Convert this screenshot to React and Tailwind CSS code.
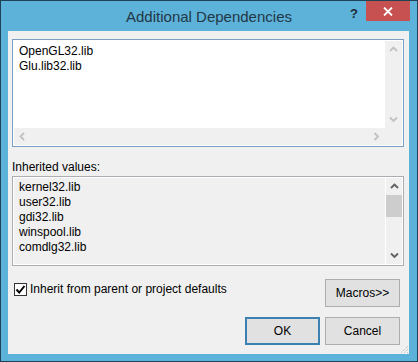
import React from "react";

const Chevron = ({ dir = "up", color = "#c2c2c2" }) => {
  const pts = {
    up: "1,5 4.5,1.5 8,5",
    down: "1,1.5 4.5,5 8,1.5",
    left: "5,1 1.5,4.5 5,8",
    right: "1.5,1 5,4.5 1.5,8",
  }[dir];
  const horiz = dir === "left" || dir === "right";
  return (
    <svg width={horiz ? 7 : 9} height={horiz ? 9 : 7} viewBox={horiz ? "0 0 7 9" : "0 0 9 7"}>
      <polyline points={pts} fill="none" stroke={color} strokeWidth="1.9" />
    </svg>
  );
};

const Btn = ({ children, primary }) => (
  <button
    className={
      "w-[75px] h-[28px] bg-[#e1e1e1] text-[12px] text-black border " +
      (primary ? "border-[#3c7fb1] shadow-[inset_0_0_0_1px_#3c7fb1]" : "border-[#adadad]")
    }
  >
    {children}
  </button>
);

export default function App() {
  return (
    <div className="w-[418px] h-[362px] bg-[#1f4257] p-px font-['Segoe_UI','Liberation_Sans',sans-serif]">
      <div className="h-full bg-[#5cb2d8] flex flex-col pl-[7px] pr-[8px] pb-[7px]">
        {/* title bar */}
        <div className="relative h-[30px] -ml-[7px] -mr-[8px] flex items-center justify-center">
          <span className="text-[15px] text-[#233746] leading-none">Additional Dependencies</span>
          <span className="absolute left-[349px] top-[3px] text-[13px] font-bold text-[#1d2b35]">?</span>
          <div className="absolute right-[7px] top-0 w-[44px] h-[20px] bg-[#c75050] flex items-center justify-center">
            <svg width="10" height="9" viewBox="0 0 10 9">
              <path d="M1 0.5 L9 8.5 M9 0.5 L1 8.5" stroke="white" strokeWidth="1.8" />
            </svg>
          </div>
        </div>

        {/* client area */}
        <div className="relative flex-1 bg-[#f0f0f0] pl-[4px] pr-[5px] pt-[8px] flex flex-col text-[12px] text-black">
          {/* additional deps edit box */}
          <div className="h-[108px] border border-[#7a9ec4] bg-white p-px grid grid-cols-[1fr_17px] grid-rows-[1fr_17px]">
            <div className="pl-[5px] pt-[3px] leading-[15px]">
              <div>OpenGL32.lib</div>
              <div>Glu.lib32.lib</div>
            </div>
            <div className="bg-[#f0f0f0] flex flex-col justify-between">
              <div className="h-[17px] flex items-center justify-center"><Chevron dir="up" /></div>
              <div className="h-[17px] flex items-center justify-center"><Chevron dir="down" /></div>
            </div>
            <div className="bg-[#f0f0f0] flex justify-between">
              <div className="w-[17px] flex items-center justify-center"><Chevron dir="left" /></div>
              <div className="w-[17px] flex items-center justify-center"><Chevron dir="right" /></div>
            </div>
            <div className="bg-[#f0f0f0]" />
          </div>

          <div className="mt-[13px] leading-[15px]">Inherited values:</div>

          {/* inherited values */}
          <div className="mt-[1px] h-[90px] border border-[#abadb3] bg-white p-px">
            <div className="h-full bg-[#f0f0f0] flex">
              <div className="flex-1 pl-[5px] pt-[2px] leading-[15px]">
                <div>kernel32.lib</div>
                <div>user32.lib</div>
                <div>gdi32.lib</div>
                <div>winspool.lib</div>
                <div>comdlg32.lib</div>
              </div>
              <div className="w-[17px] border-l border-white flex flex-col">
                <div className="h-[17px] flex items-center justify-center"><Chevron dir="up" color="#606060" /></div>
                <div className="h-[22px] bg-[#cdcdcd]" />
                <div className="flex-1" />
                <div className="h-[17px] flex items-center justify-center"><Chevron dir="down" color="#606060" /></div>
              </div>
            </div>
          </div>

          {/* checkbox + macros */}
          <div className="flex justify-between pr-[4px]">
            <label className="mt-[17px] ml-[2px] flex items-center gap-[3px] h-[13px]">
              <span className="w-[13px] h-[13px] border border-[#333] bg-white flex items-center justify-center">
                <svg width="11" height="11" viewBox="0 0 11 11">
                  <polyline points="1.5,5.5 4.2,8.5 9.5,2" fill="none" stroke="#000" strokeWidth="1.9" />
                </svg>
              </span>
              <span className="leading-[15px]">Inherit from parent or project defaults</span>
            </label>
            <div className="mt-[13px]">
              <Btn>Macros&gt;&gt;</Btn>
            </div>
          </div>

          {/* OK / Cancel */}
          <div className="mt-[10px] flex justify-end gap-[5px] pr-[4px]">
            <Btn primary>OK</Btn>
            <Btn>Cancel</Btn>
          </div>

          {/* resize grip */}
          <svg className="absolute right-0 bottom-0" width="9" height="9" viewBox="0 0 9 9">
            <path d="M8 1 L1 8 M8 4 L4 8 M8 7 L7 8" stroke="#b5b5b5" strokeWidth="1" strokeDasharray="1 1" />
          </svg>
        </div>
      </div>
    </div>
  );
}
